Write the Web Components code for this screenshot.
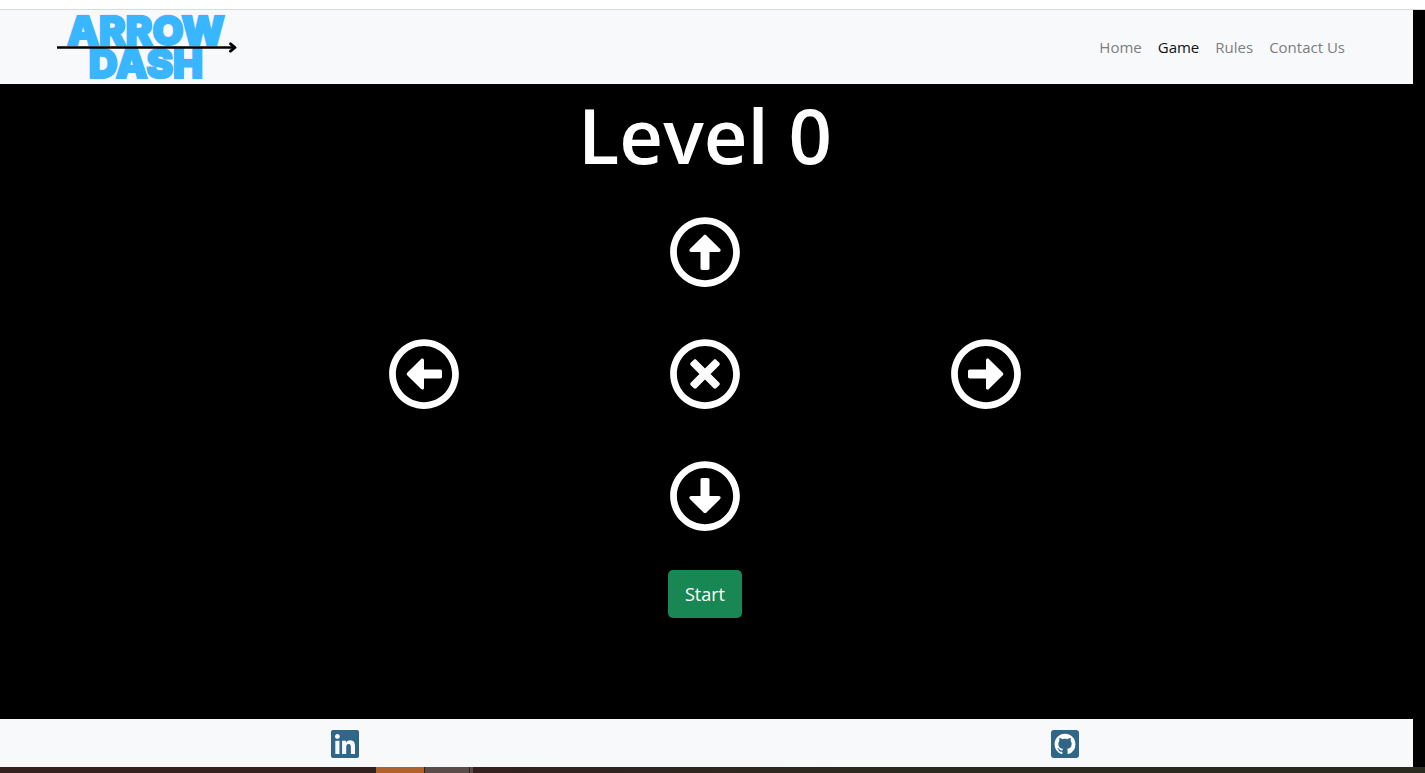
<!DOCTYPE html>
<html lang="en">
<head>
<meta charset="utf-8">
<title>Arrow Dash</title>
<style>
  html, body { margin: 0; height: 100%; background: #000; }
  body { font-family: "Open Sans", "Noto Sans", sans-serif; color: #fff; }
</style>
</head>
<body>
<dash-app></dash-app>
<script>
function define(name, html, setup) {
  const template = document.createElement('template');
  template.innerHTML = html;
  customElements.define(name, class extends HTMLElement {
    connectedCallback() {
      if (this.shadowRoot) return;
      const root = this.attachShadow({ mode: 'open' });
      root.append(template.content.cloneNode(true));
      if (setup) setup(this, root);
    }
  });
}

const ring = 'M256 504c137 0 248-111 248-248S393 8 256 8 8 119 8 256s111 248 248 248zm0-448c110.5 0 200 89.5 200 200s-89.5 200-200 200S56 366.5 56 256 145.5 56 256 56z';
const arrow = 'M276 384h-40c-6.6 0-12-5.4-12-12V256h-67c-10.7 0-16-12.9-8.5-20.5l99-99c4.7-4.7 12.3-4.7 17 0l99 99c7.6 7.6 2.2 20.5-8.5 20.5h-67v116c0 6.6-5.4 12-12 12z';
const cross = 'M357.8 193.8L295.6 256l62.2 62.2c4.7 4.7 4.7 12.3 0 17l-22.6 22.6c-4.7 4.7-12.3 4.7-17 0L256 295.6l-62.2 62.2c-4.7 4.7-12.3 4.7-17 0l-22.6-22.6c-4.7-4.7-4.7-12.3 0-17l62.2-62.2-62.2-62.2c-4.7-4.7-4.7-12.3 0-17l22.6-22.6c4.7-4.7 12.3-4.7 17 0l62.2 62.2 62.2-62.2c4.7-4.7 12.3-4.7 17 0l22.6 22.6c4.7 4.7 4.7 12.3 0 17z';
const turns = { up: 0, right: 90, down: 180, left: 270, stop: 0 };

define('dash-logo', `
<style>
  :host { display: block; }
  a { display: block; box-sizing: border-box; position: relative; width: 180px; height: 74px; padding-top: 4px; text-align: center; text-decoration: none; font: 900 40px/33px Inter, sans-serif; color: #38b6ff; -webkit-text-stroke: 2px #38b6ff; text-shadow: 0 -1px 1px #b45cf0; }
  span { display: block; padding-right: 2px; }
  svg { position: absolute; left: 0; top: 32px; width: 180px; height: 12px; }
</style>
<a href="#home">
  <span>ARROW</span>
  <span>DASH</span>
  <svg viewBox="0 0 180 12" aria-hidden="true">
    <path d="M0 5.5H177" fill="none" stroke="#000" stroke-width="2.4"/>
    <path d="M173.500 1.800L178 5.500L173.500 9.200" fill="none" stroke="#000" stroke-width="2.800" stroke-linecap="round" stroke-linejoin="round"/>
  </svg>
</a>`);

define('nav-item', `
<style>
  :host { display: block; }
  a { display: block; padding: 8px; font-size: 15px; line-height: 24px; font-weight: 400; color: #7c7d7e; text-decoration: none; white-space: nowrap; }
  :host([active]) a { color: #111; }
</style>
<a><slot></slot></a>`, (host, root) => {
  const a = root.querySelector('a');
  a.href = host.getAttribute('to');
  if (host.hasAttribute('active')) a.setAttribute('aria-current', 'page');
});

define('site-nav', `
<style>
  :host { display: block; background: #f8f9fa; }
  nav { display: flex; align-items: center; justify-content: space-between; padding: 0 60px 0 57px; }
  .links { display: flex; }
</style>
<nav>
  <dash-logo></dash-logo>
  <div class="links"><slot></slot></div>
</nav>`);

define('dash-key', `
<style>
  :host { display: flex; justify-content: center; }
  button { display: block; padding: 0; border: 0; background: none; color: inherit; cursor: pointer; border-radius: 50%; }
  svg { display: block; width: 72px; height: 72px; fill: currentColor; }
</style>
<button type="button"><svg viewBox="0 0 512 512"><path class="ring"/><path class="glyph"/></svg></button>`, (host, root) => {
  const dir = host.getAttribute('dir-name');
  root.querySelector('button').setAttribute('aria-label', dir);
  root.querySelector('.ring').setAttribute('d', ring);
  const glyph = root.querySelector('.glyph');
  glyph.setAttribute('d', dir === 'stop' ? cross : arrow);
  glyph.setAttribute('transform', 'rotate(' + turns[dir] + ' 256 256)');
});

define('game-board', `
<style>
  :host { display: block; padding: 3px 3px 0 0; }
  h1 { margin: 0 0 8px; font-size: 76px; line-height: 96px; font-weight: 600; text-align: center; }
  .pad { display: grid; grid-template: "a up b" 122px "left stop right" 122px "c down d" 122px / 1fr 1fr 1fr; align-items: center; width: 60%; max-width: 843px; margin: 0 auto; }
  .start { display: block; margin: 13px auto 0; padding: 9px 17px; border: 0; border-radius: 5px; background: #198754; color: #fff; font: 400 18px/30px "Open Sans", "Noto Sans", sans-serif; cursor: pointer; }
</style>
<h1><slot></slot></h1>
<div class="pad">
  <dash-key style="grid-area: up" dir-name="up"></dash-key>
  <dash-key style="grid-area: left" dir-name="left"></dash-key>
  <dash-key style="grid-area: stop" dir-name="stop"></dash-key>
  <dash-key style="grid-area: right" dir-name="right"></dash-key>
  <dash-key style="grid-area: down" dir-name="down"></dash-key>
</div>
<button class="start" type="button">Start</button>`);

define('site-footer', `
<style>
  :host { display: block; background: #f8f9fa; }
  footer { display: grid; grid-template-columns: 1fr 1fr; gap: 30px; padding: 11px 3px 9px 0; justify-items: center; }
  a { display: block; }
  svg { display: block; width: 28px; height: 28px; }
</style>
<footer>
  <a href="#linkedin" aria-label="LinkedIn"><svg viewBox="0 32 448 448" fill="#306688"><path d="M416 32H31.9C14.3 32 0 46.5 0 64.3v383.4C0 465.5 14.3 480 31.9 480H416c17.6 0 32-14.5 32-32.3V64.3c0-17.8-14.4-32.3-32-32.3zM135.4 416H69V202.200h66.500V416zm-33.200-243c-21.300 0-38.500-17.300-38.500-38.500S80.900 96 102.200 96c21.200 0 38.500 17.300 38.500 38.500 0 21.300-17.200 38.500-38.500 38.500zm282.100 243h-66.400V312c0-24.800-.5-56.700-34.500-56.700-34.600 0-39.900 27-39.900 54.900V416h-66.400V202.200h63.700v29.200h.9c8.900-16.800 30.600-34.500 62.900-34.500 67.200 0 79.700 44.300 79.700 101.900V416z"/></svg></a>
  <a href="#github" aria-label="GitHub"><svg viewBox="0 0 28 28"><rect width="28" height="28" rx="3" fill="#306688"/><path fill="#fff" transform="translate(3.600 3.800) scale(1.300)" d="M8 0C3.580 0 0 3.580 0 8c0 3.540 2.290 6.530 5.470 7.590.4.070.55-.17.55-.38 0-.19-.01-.82-.01-1.490-2.010.37-2.530-.49-2.690-.94-.09-.23-.48-.94-.82-1.130-.28-.15-.68-.52-.01-.53.63-.01 1.080.58 1.230.82.72 1.210 1.870.87 2.330.66.07-.52.28-.87.51-1.070-1.780-.2-3.640-.89-3.640-3.950 0-.87.31-1.590.82-2.150-.08-.2-.36-1.020.08-2.120 0 0 .67-.21 2.200.82.64-.18 1.320-.27 2-.27s1.360.09 2 .27c1.530-1.040 2.200-.82 2.200-.82.44 1.100.16 1.920.08 2.120.51.56.82 1.270.82 2.150 0 3.070-1.870 3.750-3.650 3.950.29.25.54.73.54 1.480 0 1.070-.01 1.930-.01 2.200 0 .21.15.46.55.38A8.010 8.010 0 0 0 16 8c0-4.420-3.580-8-8-8z"/></svg></a>
</footer>`);

define('dash-app', `
<style>
  :host { display: flex; flex-direction: column; min-height: 100vh; }
  .top { height: 9px; background: #fff; border-bottom: 1px solid #d9dadb; }
  .page { flex: 1; display: flex; flex-direction: column; margin-right: 12px; }
  game-board { flex: 1; }
  .bar { height: 6px; background: linear-gradient(90deg, #33211f 376px, #b0622a 376px 424px, #33211f 424px 425px, #5a4d49 425px 469px, #33211f 469px 470px, #5a4d49 470px 473px, #33211f 473px, #2b2a20 900px); }
</style>
<div class="top"></div>
<div class="page">
  <site-nav>
    <nav-item to="#home">Home</nav-item>
    <nav-item to="#game" active>Game</nav-item>
    <nav-item to="#rules">Rules</nav-item>
    <nav-item to="#contact">Contact Us</nav-item>
  </site-nav>
  <game-board>Level 0</game-board>
  <site-footer></site-footer>
</div>
<div class="bar"></div>`);
</script>
</body>
</html>
